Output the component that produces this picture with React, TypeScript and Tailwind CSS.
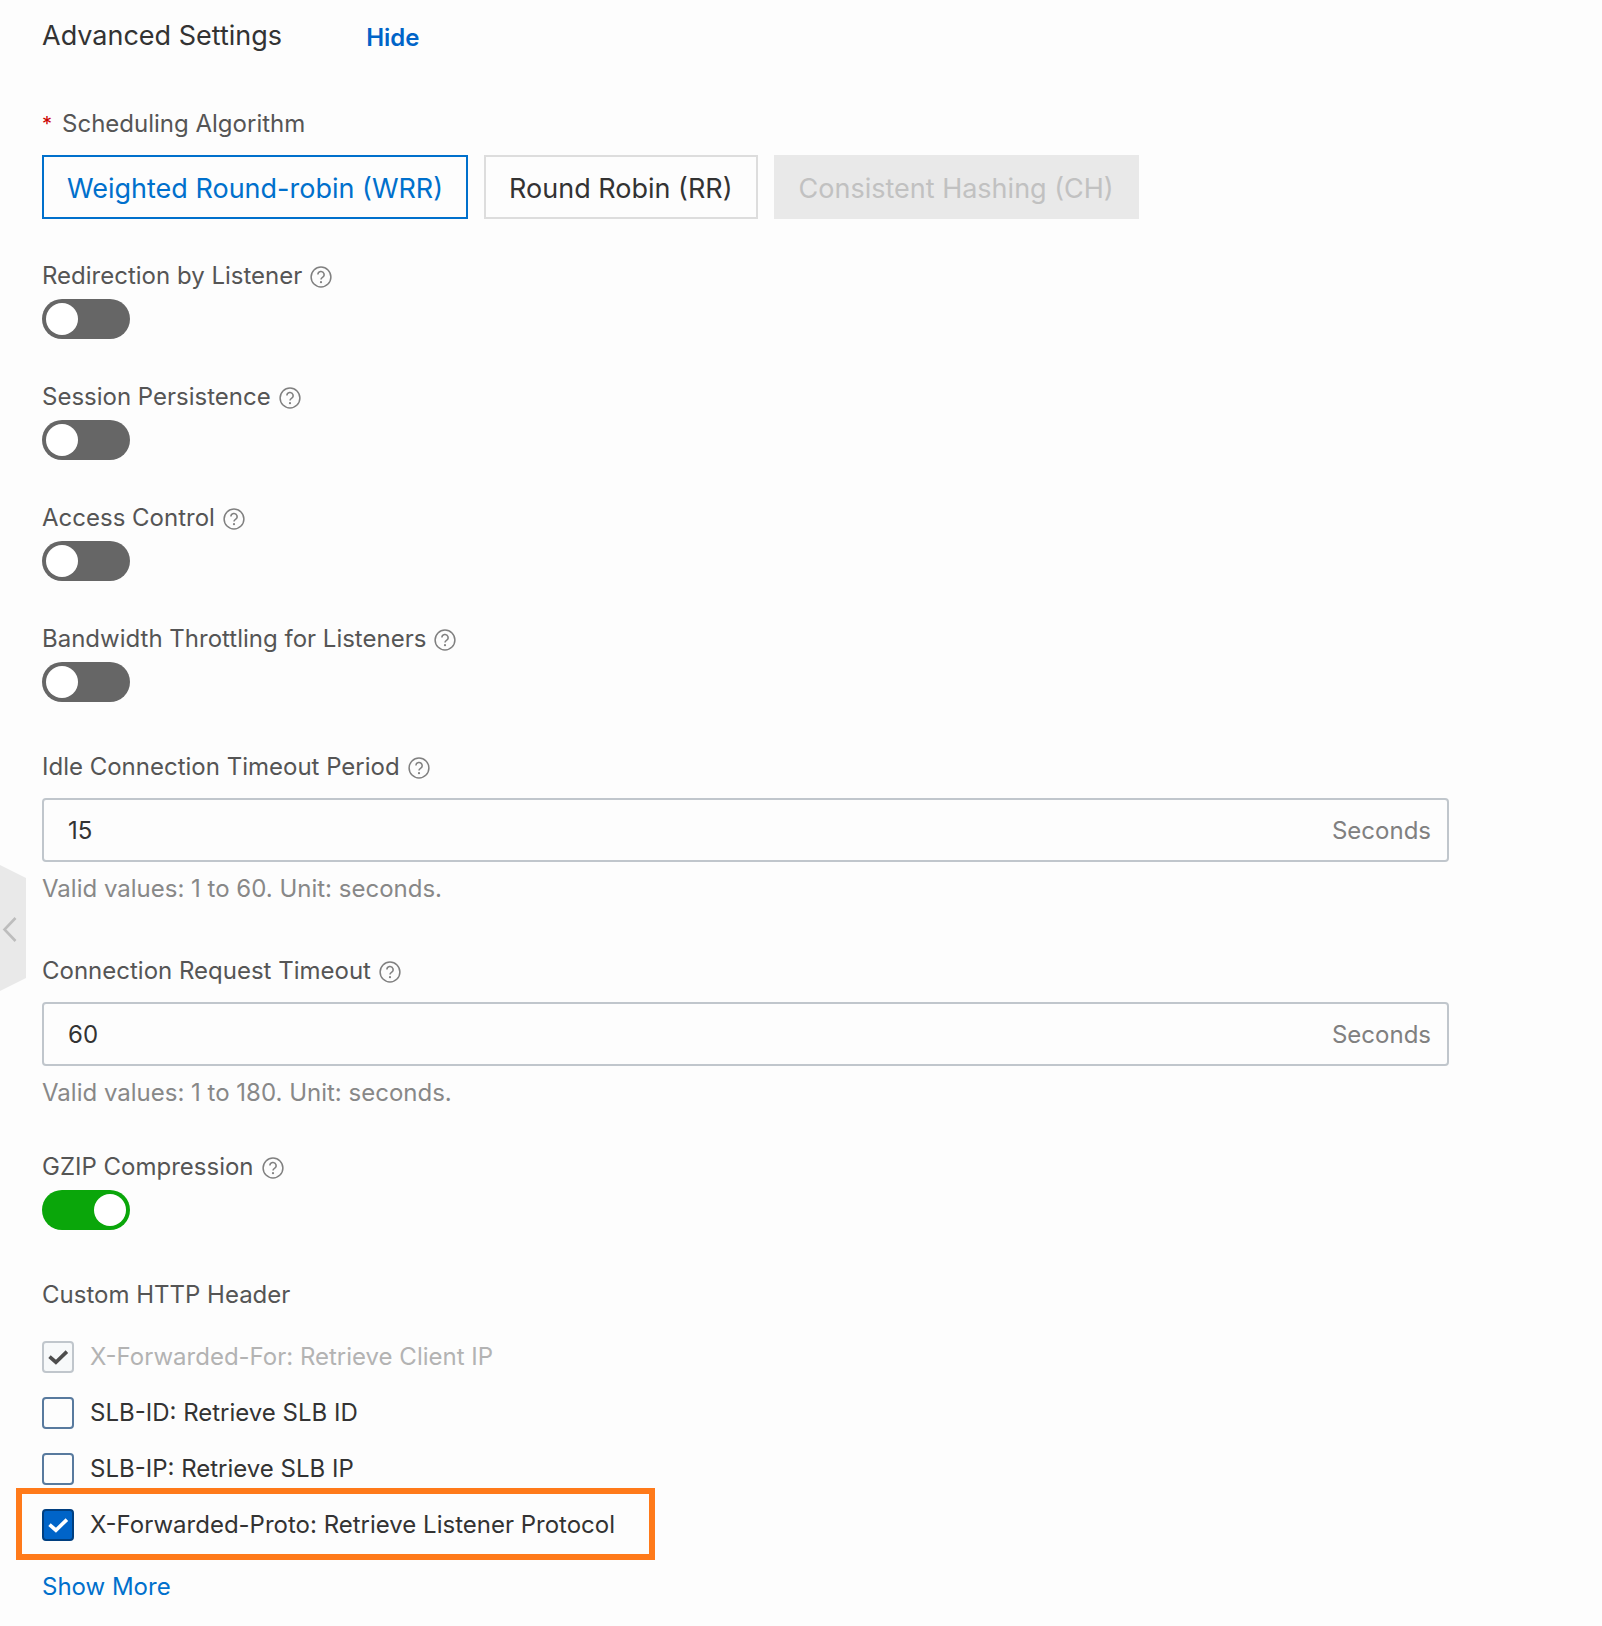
import { useId, useState, type ReactNode } from 'react'
import clsx from 'clsx'

function HelpIcon() {
  return (
    <svg viewBox="0 0 22 22" className="w-[22px] h-[22px] shrink-0 text-[#808080]" fill="none" stroke="currentColor" strokeWidth="1.5">
      <circle cx="11" cy="11" r="9.9" />
      <path d="M7.9 8.6a3.1 3.1 0 1 1 4.6 2.7c-1 .6-1.5 1.1-1.5 2.2" />
      <circle cx="11" cy="16.2" r="1.1" fill="currentColor" stroke="none" />
    </svg>
  )
}

function FieldLabel({ htmlFor, children }: { htmlFor: string; children: ReactNode }) {
  return (
    <div className="flex items-center gap-2">
      <label htmlFor={htmlFor} className="text-[#555555]">{children}</label>
      <button type="button" aria-label="Help" className="pt-[2px]">
        <HelpIcon />
      </button>
    </div>
  )
}

function SwitchField({ label, defaultOn = false }: { label: string; defaultOn?: boolean }) {
  const id = useId()
  const [on, setOn] = useState(defaultOn)
  return (
    <div>
      <FieldLabel htmlFor={id}>{label}</FieldLabel>
      <button
        id={id}
        type="button"
        role="switch"
        aria-checked={on}
        onClick={() => setOn(!on)}
        className={clsx('mt-[7px] flex w-[88px] h-10 p-1 rounded-full', on ? 'justify-end bg-[#0aa60a]' : 'bg-[#666666]')}
      >
        <span className="size-8 rounded-full bg-white" />
      </button>
    </div>
  )
}

function TimeoutField({ label, value, hint }: { label: string; value: string; hint: string }) {
  const id = useId()
  return (
    <div>
      <FieldLabel htmlFor={id}>{label}</FieldLabel>
      <div className="mt-[15px] flex items-center h-16 border-2 border-[#c0c6cc] rounded pt-[2px] pl-6 pr-4">
        <input id={id} type="text" defaultValue={value} className="flex-1 min-w-0 bg-transparent text-[#333333] outline-none" />
        <span className="text-[#808080]">Seconds</span>
      </div>
      <p className="mt-[11px] text-[#888888]">{hint}</p>
    </div>
  )
}

function HeaderOption({ label, defaultChecked, disabled, highlighted }: {
  label: string
  defaultChecked?: boolean
  disabled?: boolean
  highlighted?: boolean
}) {
  return (
    <div className="relative w-fit">
      <label className={clsx('flex items-center gap-4', disabled ? 'text-[#b3b3b3]' : 'text-[#333333]')}>
        <span className="grid size-8 shrink-0">
          <input
            type="checkbox"
            defaultChecked={defaultChecked}
            disabled={disabled}
            className="peer col-start-1 row-start-1 size-8 appearance-none rounded border-2 border-[#587a9e] checked:border-[#003f80] checked:bg-[#0064c8] disabled:border-[#c0c6cc] disabled:bg-[#f7f9fa]"
          />
          <svg
            viewBox="0 0 32 32"
            className="hidden peer-checked:block pointer-events-none col-start-1 row-start-1 size-8 text-white peer-disabled:text-[#4d4d4d]"
            fill="none"
            stroke="currentColor"
            strokeWidth="3.6"
          >
            <path d="M7.5 15.6L13.9 21.2L24.9 10.6" />
          </svg>
        </span>
        {label}
      </label>
      {highlighted && (
        <div className="absolute -top-[21px] -bottom-[19px] -left-[26px] -right-10 border-6 border-[#ff7a1a] pointer-events-none" />
      )}
    </div>
  )
}

const algorithms = [
  { id: 'wrr', label: 'Weighted Round-robin (WRR)' },
  { id: 'rr', label: 'Round Robin (RR)' },
  { id: 'ch', label: 'Consistent Hashing (CH)', disabled: true },
]

export default function App() {
  const [algorithm, setAlgorithm] = useState('wrr')

  return (
    <div className="relative min-h-screen bg-[#fdfdfd] font-['Inter',sans-serif] text-[24px] leading-8">
      <button type="button" aria-label="Collapse panel" className="absolute left-0 top-[865px]">
        <svg viewBox="0 0 26 126" className="w-[26px] h-[126px]">
          <path d="M0 0L26 13V113L0 126Z" fill="#e9e9e9" />
          <path d="M15.5 53L4.5 64.5L15.5 76" fill="none" stroke="#bdbdbd" strokeWidth="2.6" />
        </svg>
      </button>

      <main className="pl-[42px] pr-[153px] pt-5 pb-6">
        <header className="flex items-start gap-[84px]">
          <h1 className="text-[27px] text-[#333333]">Advanced Settings</h1>
          <button type="button" className="pt-[2px] font-semibold text-[#0064c8]">Hide</button>
        </header>

        <div className="mt-[54px]">
          <h2 id="algorithm" className="flex gap-[10px] text-[#555555]">
            <span className="text-[20px] text-[#cc0000]">*</span>
            Scheduling Algorithm
          </h2>
          <div role="group" aria-labelledby="algorithm" className="mt-[15px] flex gap-4">
            {algorithms.map((a) => (
              <button
                key={a.id}
                type="button"
                disabled={a.disabled}
                aria-pressed={algorithm === a.id}
                onClick={() => setAlgorithm(a.id)}
                className={clsx(
                  'h-16 px-[23px] pt-1 border-2 text-[27px] whitespace-nowrap',
                  a.disabled && 'border-[#e9e9e9] bg-[#e9e9e9] text-[#c1c1c1]',
                  !a.disabled && algorithm === a.id && 'border-[#0070cc] text-[#0070cc]',
                  !a.disabled && algorithm !== a.id && 'border-[#dddddd] text-[#333333]',
                )}
              >
                {a.label}
              </button>
            ))}
          </div>
        </div>

        <div className="mt-[41px] flex flex-col gap-[42px]">
          <SwitchField label="Redirection by Listener" />
          <SwitchField label="Session Persistence" />
          <SwitchField label="Access Control" />
          <SwitchField label="Bandwidth Throttling for Listeners" />
        </div>

        <div className="mt-[49px] flex flex-col gap-[50px]">
          <TimeoutField label="Idle Connection Timeout Period" value="15" hint="Valid values: 1 to 60. Unit: seconds." />
          <TimeoutField label="Connection Request Timeout" value="60" hint="Valid values: 1 to 180. Unit: seconds." />
        </div>

        <div className="mt-[42px]">
          <SwitchField label="GZIP Compression" defaultOn />
        </div>

        <fieldset className="mt-[49px]">
          <legend className="text-[#555555]">Custom HTTP Header</legend>
          <div className="mt-[30px] flex flex-col gap-6">
            <HeaderOption label="X-Forwarded-For: Retrieve Client IP" defaultChecked disabled />
            <HeaderOption label="SLB-ID: Retrieve SLB ID" />
            <HeaderOption label="SLB-IP: Retrieve SLB IP" />
            <HeaderOption label="X-Forwarded-Proto: Retrieve Listener Protocol" defaultChecked highlighted />
          </div>
        </fieldset>

        <button type="button" className="mt-[30px] text-[#0070cc]">Show More</button>
      </main>
    </div>
  )
}
